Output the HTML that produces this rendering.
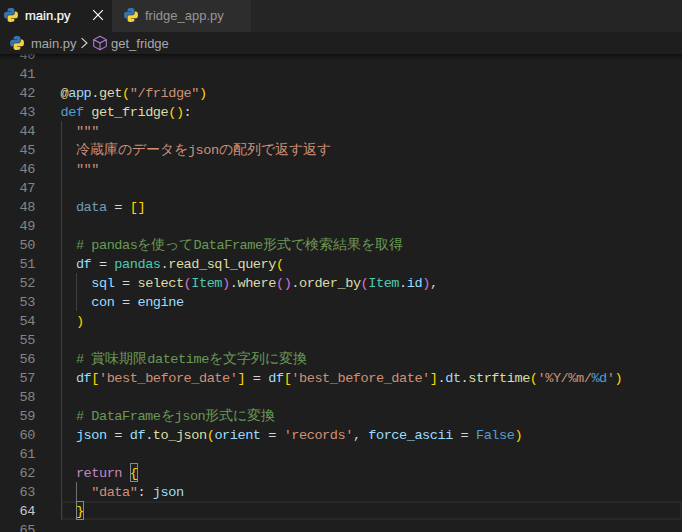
<!DOCTYPE html>
<html><head><meta charset="utf-8"><style>
html,body{margin:0;padding:0;}
body{width:682px;height:532px;overflow:hidden;position:relative;background:#1e1e1e;font-family:"Liberation Sans",sans-serif;}
.abs{position:absolute;}
svg{display:block;}
#tabs{position:absolute;left:0;top:0;width:682px;height:32px;background:#252526;}
.tab{position:absolute;top:0;height:32px;}
.tt{position:absolute;font-size:13px;line-height:16px;white-space:nowrap;}
#bc{position:absolute;left:0;top:32px;width:682px;height:22px;background:#1e1e1e;}
#ed{position:absolute;left:0;top:54px;width:682px;height:478px;overflow:hidden;background:#1e1e1e;}
.ln{position:absolute;left:0;width:35px;text-align:right;height:19px;line-height:19px;font-family:"Liberation Mono",monospace;font-size:13.6px;letter-spacing:-0.465px;white-space:nowrap;}
.cl{position:absolute;left:60.5px;height:19px;line-height:19px;font-family:"Liberation Mono",monospace;font-size:13.6px;letter-spacing:-0.465px;white-space:pre;}
.j{font-size:14px;letter-spacing:0;}
.ig{position:absolute;width:1px;}
#shadow{position:absolute;left:0;top:54px;width:682px;height:6px;box-shadow:#000000 0 6px 6px -6px inset;}
</style></head><body>
<div id="tabs">
  <div class="tab" style="left:0;width:112px;background:#1e1e1e">
    <div class="abs" style="left:4px;top:8px;width:14px;height:14px"><svg width="14" height="14" viewBox="0 0 110 110"><path fill="#3873ab" d="M54.9 0.1c-4.6 0-9 .4-12.8 1.1C30.8 3.2 28.7 7.3 28.7 15v10.1h26.6v3.4H18.7c-7.7 0-14.5 4.6-16.6 13.4-2.4 10.1-2.5 16.4 0 26.9 1.9 7.8 6.4 13.4 14.1 13.4h9.1V70.1c0-8.8 7.6-16.5 16.6-16.5h26.6c7.4 0 13.3-6.1 13.3-13.5V15c0-7.2-6.1-12.6-13.3-13.8C74.8.4 69.8.1 65.3.1z"/><path fill="#f6d23e" transform="rotate(180 55 55)" d="M54.9 0.1c-4.6 0-9 .4-12.8 1.1C30.8 3.2 28.7 7.3 28.7 15v10.1h26.6v3.4H18.7c-7.7 0-14.5 4.6-16.6 13.4-2.4 10.1-2.5 16.4 0 26.9 1.9 7.8 6.4 13.4 14.1 13.4h9.1V70.1c0-8.8 7.6-16.5 16.6-16.5h26.6c7.4 0 13.3-6.1 13.3-13.5V15c0-7.2-6.1-12.6-13.3-13.8C74.8.4 69.8.1 65.3.1z"/></svg></div>
    <div class="tt" style="left:25px;top:8px;color:#ffffff;-webkit-text-stroke:0.2px #ffffff">main.py</div>
    <div class="abs" style="left:92px;top:9px;width:12px;height:12px"><svg width="12" height="12" viewBox="0 0 12 12"><path stroke="#ffffff" stroke-width="1.15" d="M1.2 1.2 L10.8 10.8 M10.8 1.2 L1.2 10.8"/></svg></div>
  </div>
  <div class="tab" style="left:112px;width:139px;background:#2d2d2d;border-right:1px solid #252526">
    <div class="abs" style="left:12px;top:8px;width:14px;height:14px"><svg width="14" height="14" viewBox="0 0 110 110"><path fill="#3873ab" d="M54.9 0.1c-4.6 0-9 .4-12.8 1.1C30.8 3.2 28.7 7.3 28.7 15v10.1h26.6v3.4H18.7c-7.7 0-14.5 4.6-16.6 13.4-2.4 10.1-2.5 16.4 0 26.9 1.9 7.8 6.4 13.4 14.1 13.4h9.1V70.1c0-8.8 7.6-16.5 16.6-16.5h26.6c7.4 0 13.3-6.1 13.3-13.5V15c0-7.2-6.1-12.6-13.3-13.8C74.8.4 69.8.1 65.3.1z"/><path fill="#f6d23e" transform="rotate(180 55 55)" d="M54.9 0.1c-4.6 0-9 .4-12.8 1.1C30.8 3.2 28.7 7.3 28.7 15v10.1h26.6v3.4H18.7c-7.7 0-14.5 4.6-16.6 13.4-2.4 10.1-2.5 16.4 0 26.9 1.9 7.8 6.4 13.4 14.1 13.4h9.1V70.1c0-8.8 7.6-16.5 16.6-16.5h26.6c7.4 0 13.3-6.1 13.3-13.5V15c0-7.2-6.1-12.6-13.3-13.8C74.8.4 69.8.1 65.3.1z"/></svg></div>
    <div class="tt" style="left:33px;top:8px;color:#969696">fridge_app.py</div>
  </div>
</div>
<div id="bc">
  <div class="abs" style="left:10px;top:4px;width:14px;height:14px"><svg width="14" height="14" viewBox="0 0 110 110"><path fill="#3873ab" d="M54.9 0.1c-4.6 0-9 .4-12.8 1.1C30.8 3.2 28.7 7.3 28.7 15v10.1h26.6v3.4H18.7c-7.7 0-14.5 4.6-16.6 13.4-2.4 10.1-2.5 16.4 0 26.9 1.9 7.8 6.4 13.4 14.1 13.4h9.1V70.1c0-8.8 7.6-16.5 16.6-16.5h26.6c7.4 0 13.3-6.1 13.3-13.5V15c0-7.2-6.1-12.6-13.3-13.8C74.8.4 69.8.1 65.3.1z"/><path fill="#f6d23e" transform="rotate(180 55 55)" d="M54.9 0.1c-4.6 0-9 .4-12.8 1.1C30.8 3.2 28.7 7.3 28.7 15v10.1h26.6v3.4H18.7c-7.7 0-14.5 4.6-16.6 13.4-2.4 10.1-2.5 16.4 0 26.9 1.9 7.8 6.4 13.4 14.1 13.4h9.1V70.1c0-8.8 7.6-16.5 16.6-16.5h26.6c7.4 0 13.3-6.1 13.3-13.5V15c0-7.2-6.1-12.6-13.3-13.8C74.8.4 69.8.1 65.3.1z"/></svg></div>
  <div class="tt" style="left:31px;top:4px;color:#a9a9a9">main.py</div>
  <div class="abs" style="left:80px;top:4px;width:10px;height:14px"><svg width="10" height="14" viewBox="80 36 10 14"><path fill="none" stroke="#cccccc" stroke-width="1.25" d="M81.6 38.1 L86.9 43 L81.6 47.9"/></svg></div>
  <div class="abs" style="left:92px;top:3px;width:16px;height:17px"><svg width="16" height="17" viewBox="92 35 16 17"><path fill="none" stroke="#b180d7" stroke-width="1.05" stroke-linejoin="round" d="M100 36.2 L106.3 39.6 V46.4 L100 49.8 L93.7 46.4 V39.6 Z M93.9 39.7 L100 43 L106.1 39.7 M100 43 V49.6"/></svg></div>
  <div class="tt" style="left:111px;top:4px;color:#a9a9a9">get_fridge</div>
</div>
<div id="ed">
<div style="position:absolute;left:0;top:-54px;width:682px;height:586px;">
<div class="abs" style="left:61px;top:501px;width:621px;height:19px;box-sizing:border-box;border:2px solid #282828;"></div>
<div class="ig" style="left:61px;top:121px;height:399px;background:#404040"></div><div class="ig" style="left:76px;top:273px;height:38px;background:#404040"></div><div class="ig" style="left:76px;top:482px;height:19px;background:#707070"></div>
<div class="abs" style="left:130px;top:463px;width:8px;height:19px;box-sizing:border-box;border:1px solid #888888;background:#1b251b"></div>
<div class="abs" style="left:76px;top:501px;width:8px;height:19px;box-sizing:border-box;border:1px solid #888888;background:#1b251b"></div>
<div style="position:absolute;left:0;top:1.0px;width:682px;height:586px;">
<div class="ln" style="top:45px;color:#858585">40</div><div class="ln" style="top:64px;color:#858585">41</div><div class="ln" style="top:83px;color:#858585">42</div><div class="ln" style="top:102px;color:#858585">43</div><div class="ln" style="top:121px;color:#858585">44</div><div class="ln" style="top:140px;color:#858585">45</div><div class="ln" style="top:159px;color:#858585">46</div><div class="ln" style="top:178px;color:#858585">47</div><div class="ln" style="top:197px;color:#858585">48</div><div class="ln" style="top:216px;color:#858585">49</div><div class="ln" style="top:235px;color:#858585">50</div><div class="ln" style="top:254px;color:#858585">51</div><div class="ln" style="top:273px;color:#858585">52</div><div class="ln" style="top:292px;color:#858585">53</div><div class="ln" style="top:311px;color:#858585">54</div><div class="ln" style="top:330px;color:#858585">55</div><div class="ln" style="top:349px;color:#858585">56</div><div class="ln" style="top:368px;color:#858585">57</div><div class="ln" style="top:387px;color:#858585">58</div><div class="ln" style="top:406px;color:#858585">59</div><div class="ln" style="top:425px;color:#858585">60</div><div class="ln" style="top:444px;color:#858585">61</div><div class="ln" style="top:463px;color:#858585">62</div><div class="ln" style="top:482px;color:#858585">63</div><div class="ln" style="top:501px;color:#c6c6c6">64</div><div class="ln" style="top:520px;color:#858585">65</div>
<div class="cl" style="top:83px"><span style="color:#dcdcaa">@</span><span style="color:#9cdcfe">app</span><span style="color:#d4d4d4">.</span><span style="color:#dcdcaa">get</span><span style="color:#ffd700">(</span><span style="color:#ce9178">&quot;/fridge&quot;</span><span style="color:#ffd700">)</span></div><div class="cl" style="top:102px"><span style="color:#569cd6">def</span><span style="color:#d4d4d4">&nbsp;</span><span style="color:#dcdcaa">get_fridge</span><span style="color:#ffd700">()</span><span style="color:#d4d4d4">:</span></div><div class="cl" style="top:121px"><span style="color:#d4d4d4">&nbsp;&nbsp;</span><span style="color:#ce9178">&quot;&quot;&quot;</span></div><div class="cl" style="top:140px"><span style="color:#d4d4d4">&nbsp;&nbsp;</span><span style="color:#ce9178" class="j">冷蔵庫のデータを</span><span style="color:#ce9178">json</span><span style="color:#ce9178" class="j">の配列で返す返す</span></div><div class="cl" style="top:159px"><span style="color:#d4d4d4">&nbsp;&nbsp;</span><span style="color:#ce9178">&quot;&quot;&quot;</span></div><div class="cl" style="top:197px"><span style="color:#d4d4d4">&nbsp;&nbsp;</span><span style="color:#9cdcfe;opacity:0.667">data</span><span style="color:#d4d4d4">&nbsp;=&nbsp;</span><span style="color:#ffd700">[]</span></div><div class="cl" style="top:235px"><span style="color:#d4d4d4">&nbsp;&nbsp;</span><span style="color:#6a9955">#&nbsp;pandas</span><span style="color:#6a9955" class="j">を使って</span><span style="color:#6a9955">DataFrame</span><span style="color:#6a9955" class="j">形式で検索結果を取得</span></div><div class="cl" style="top:254px"><span style="color:#d4d4d4">&nbsp;&nbsp;</span><span style="color:#9cdcfe">df</span><span style="color:#d4d4d4">&nbsp;=&nbsp;</span><span style="color:#4ec9b0">pandas</span><span style="color:#d4d4d4">.</span><span style="color:#dcdcaa">read_sql_query</span><span style="color:#ffd700">(</span></div><div class="cl" style="top:273px"><span style="color:#d4d4d4">&nbsp;&nbsp;&nbsp;&nbsp;</span><span style="color:#9cdcfe">sql</span><span style="color:#d4d4d4">&nbsp;=&nbsp;</span><span style="color:#dcdcaa">select</span><span style="color:#da70d6">(</span><span style="color:#4ec9b0">Item</span><span style="color:#da70d6">)</span><span style="color:#d4d4d4">.</span><span style="color:#dcdcaa">where</span><span style="color:#da70d6">()</span><span style="color:#d4d4d4">.</span><span style="color:#dcdcaa">order_by</span><span style="color:#da70d6">(</span><span style="color:#4ec9b0">Item</span><span style="color:#d4d4d4">.</span><span style="color:#9cdcfe">id</span><span style="color:#da70d6">)</span><span style="color:#d4d4d4">,</span></div><div class="cl" style="top:292px"><span style="color:#d4d4d4">&nbsp;&nbsp;&nbsp;&nbsp;</span><span style="color:#9cdcfe">con</span><span style="color:#d4d4d4">&nbsp;=&nbsp;</span><span style="color:#9cdcfe">engine</span></div><div class="cl" style="top:311px"><span style="color:#d4d4d4">&nbsp;&nbsp;</span><span style="color:#ffd700">)</span></div><div class="cl" style="top:349px"><span style="color:#d4d4d4">&nbsp;&nbsp;</span><span style="color:#6a9955">#&nbsp;</span><span style="color:#6a9955" class="j">賞味期限</span><span style="color:#6a9955">datetime</span><span style="color:#6a9955" class="j">を文字列に変換</span></div><div class="cl" style="top:368px"><span style="color:#d4d4d4">&nbsp;&nbsp;</span><span style="color:#9cdcfe">df</span><span style="color:#ffd700">[</span><span style="color:#ce9178">&#x27;best_before_date&#x27;</span><span style="color:#ffd700">]</span><span style="color:#d4d4d4">&nbsp;=&nbsp;</span><span style="color:#9cdcfe">df</span><span style="color:#ffd700">[</span><span style="color:#ce9178">&#x27;best_before_date&#x27;</span><span style="color:#ffd700">]</span><span style="color:#d4d4d4">.</span><span style="color:#9cdcfe">dt</span><span style="color:#d4d4d4">.</span><span style="color:#dcdcaa">strftime</span><span style="color:#ffd700">(</span><span style="color:#ce9178">&#x27;%Y/%m/</span><span style="color:#569cd6">%d</span><span style="color:#ce9178">&#x27;</span><span style="color:#ffd700">)</span></div><div class="cl" style="top:406px"><span style="color:#d4d4d4">&nbsp;&nbsp;</span><span style="color:#6a9955">#&nbsp;DataFrame</span><span style="color:#6a9955" class="j">を</span><span style="color:#6a9955">json</span><span style="color:#6a9955" class="j">形式に変換</span></div><div class="cl" style="top:425px"><span style="color:#d4d4d4">&nbsp;&nbsp;</span><span style="color:#9cdcfe">json</span><span style="color:#d4d4d4">&nbsp;=&nbsp;</span><span style="color:#9cdcfe">df</span><span style="color:#d4d4d4">.</span><span style="color:#dcdcaa">to_json</span><span style="color:#ffd700">(</span><span style="color:#9cdcfe">orient</span><span style="color:#d4d4d4">&nbsp;=&nbsp;</span><span style="color:#ce9178">&#x27;records&#x27;</span><span style="color:#d4d4d4">,&nbsp;</span><span style="color:#9cdcfe">force_ascii</span><span style="color:#d4d4d4">&nbsp;=&nbsp;</span><span style="color:#569cd6">False</span><span style="color:#ffd700">)</span></div><div class="cl" style="top:463px"><span style="color:#d4d4d4">&nbsp;&nbsp;</span><span style="color:#c586c0">return</span><span style="color:#d4d4d4">&nbsp;</span><span style="color:#ffd700">{</span></div><div class="cl" style="top:482px"><span style="color:#d4d4d4">&nbsp;&nbsp;&nbsp;&nbsp;</span><span style="color:#ce9178">&quot;data&quot;</span><span style="color:#d4d4d4">:&nbsp;</span><span style="color:#9cdcfe">json</span></div><div class="cl" style="top:501px"><span style="color:#d4d4d4">&nbsp;&nbsp;</span><span style="color:#ffd700">}</span></div>
</div>
</div>
</div>
<div id="shadow"></div>
</body></html>
